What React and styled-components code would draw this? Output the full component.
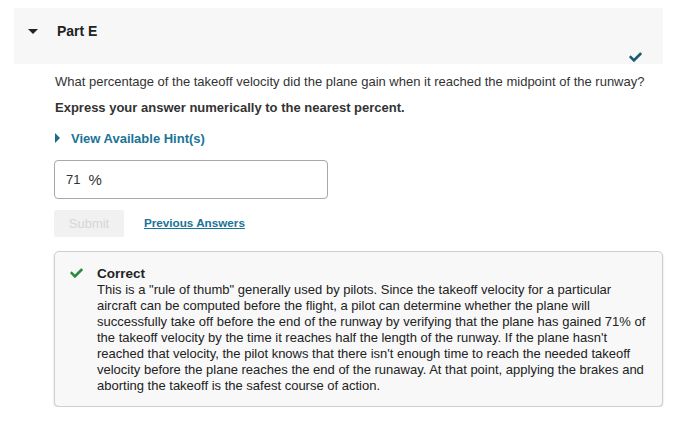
import React from "react";
import styled, { createGlobalStyle } from "styled-components";

const Global = createGlobalStyle`
  html, body { margin: 0; padding: 0; background: #fff; }
  body { font-family: "Liberation Sans", Arial, sans-serif; color: #333; }
`;

const Page = styled.div`
  padding: 8px 16px 0 14px;
  width: 649px;
`;

const Header = styled.div`
  display: flex;
  align-items: flex-start;
  height: 56px;
  background: #f7f7f7;
  padding: 15px 21px 0 14px;
  box-sizing: border-box;
`;

const Caret = styled.span`
  width: 0;
  height: 0;
  border-left: 5px solid transparent;
  border-right: 5px solid transparent;
  border-top: 5px solid #222;
  margin-right: 19px;
  margin-top: 6px;
`;

const Title = styled.h2`
  margin: 0;
  font-size: 14px;
  line-height: 16px;
  font-weight: bold;
  color: #222;
  flex: 1;
`;

const HeadCheck = styled.span`
  align-self: flex-end;
  display: flex;
  margin-bottom: 2px;
`;

const Body = styled.div`
  padding-left: 40px;
`;

const Question = styled.p`
  margin: 9px 0 0 1px;
  font-size: 13px;
  line-height: 18px;
  color: #333;
`;

const Instruction = styled.p`
  margin: 8px 0 0 1px;
  font-size: 13px;
  line-height: 18px;
  font-weight: bold;
  color: #333;
`;

const Hint = styled.div`
  display: flex;
  align-items: center;
  margin-top: 12px;
  height: 18px;
  font-size: 13px;
  font-weight: bold;
  color: #1a7396;
`;

const HintCaret = styled.span`
  width: 0;
  height: 0;
  border-top: 5px solid transparent;
  border-bottom: 5px solid transparent;
  border-left: 5px solid #1a6a88;
  margin: 0 11px 0 1px;
`;

const Input = styled.div`
  margin-top: 13px;
  width: 274px;
  height: 39px;
  box-sizing: border-box;
  border: 1px solid #a8a8a8;
  border-radius: 4px;
  display: flex;
  align-items: center;
  padding-left: 11px;
  font-size: 13px;
  color: #333;
  gap: 8px;
`;

const Unit = styled.span`
  font-size: 15px;
`;

const Actions = styled.div`
  display: flex;
  align-items: center;
  margin-top: 11px;
  gap: 20px;
`;

const SubmitBtn = styled.button`
  width: 70px;
  height: 27px;
  border: none;
  border-radius: 2px;
  background: #f1f1f1;
  color: #d6d6d6;
  font-family: inherit;
  font-size: 13px;
  padding: 0;
`;

const LinkText = styled.a`
  font-size: 11.7px;
  font-weight: bold;
  color: #1a7396;
  text-decoration: underline;
  margin-top: -2px;
`;

const Feedback = styled.div`
  margin-top: 14px;
  width: 609px;
  box-sizing: border-box;
  border: 1px solid #cfcfcf;
  border-radius: 5px;
  background: #f8f8f8;
  box-shadow: 0 1px 2px rgba(0, 0, 0, 0.18);
  display: flex;
  padding: 13px 10px 14px 15px;
  gap: 14px;
  height: 156px;
`;

const FeedCheck = styled.span`
  display: flex;
  margin-top: 3px;
`;

const FeedText = styled.div`
  flex: 1;
  font-size: 13px;
  line-height: 16px;
  color: #222;
  white-space: nowrap;
`;

const FeedTitle = styled.div`
  font-size: 13.5px;
  font-weight: bold;
  line-height: 17px;
  color: #222;
`;

const Check = ({ color, w, h }) => (
  <svg width={w} height={h} viewBox="0 0 512 400" fill={color}>
    <path d="M173.9 389.4L7.5 223c-10-10-10-26.2 0-36.2l36.2-36.2c10-10 26.2-10 36.2 0L192 262.7 432.1 22.6c10-10 26.2-10 36.2 0l36.2 36.2c10 10 10 26.2 0 36.2L210.1 389.4c-10 10-26.2 10-36.2 0z" />
  </svg>
);

const lines = [
  'This is a "rule of thumb" generally used by pilots. Since the takeoff velocity for a particular',
  "aircraft can be computed before the flight, a pilot can determine whether the plane will",
  "successfully take off before the end of the runway by verifying that the plane has gained 71% of",
  "the takeoff velocity by the time it reaches half the length of the runway. If the plane hasn't",
  "reached that velocity, the pilot knows that there isn't enough time to reach the needed takeoff",
  "velocity before the plane reaches the end of the runaway. At that point, applying the brakes and",
  "aborting the takeoff is the safest course of action.",
];

export default function App() {
  return (
    <>
      <Global />
      <Page>
        <Header>
          <Caret />
          <Title>Part E</Title>
          <HeadCheck>
            <Check color="#1b5a72" w={13} h={10} />
          </HeadCheck>
        </Header>
        <Body>
          <Question>
            What percentage of the takeoff velocity did the plane gain when it reached the midpoint of the runway?
          </Question>
          <Instruction>Express your answer numerically to the nearest percent.</Instruction>
          <Hint>
            <HintCaret />
            View Available Hint(s)
          </Hint>
          <Input>
            <span>71</span>
            <Unit>%</Unit>
          </Input>
          <Actions>
            <SubmitBtn disabled>Submit</SubmitBtn>
            <LinkText href="#">Previous Answers</LinkText>
          </Actions>
          <Feedback>
            <FeedCheck>
              <Check color="#2b8a3e" w={13} h={10} />
            </FeedCheck>
            <FeedText>
              <FeedTitle>Correct</FeedTitle>
              {lines.map((l, i) => (
                <div key={i}>{l}</div>
              ))}
            </FeedText>
          </Feedback>
        </Body>
      </Page>
    </>
  );
}
